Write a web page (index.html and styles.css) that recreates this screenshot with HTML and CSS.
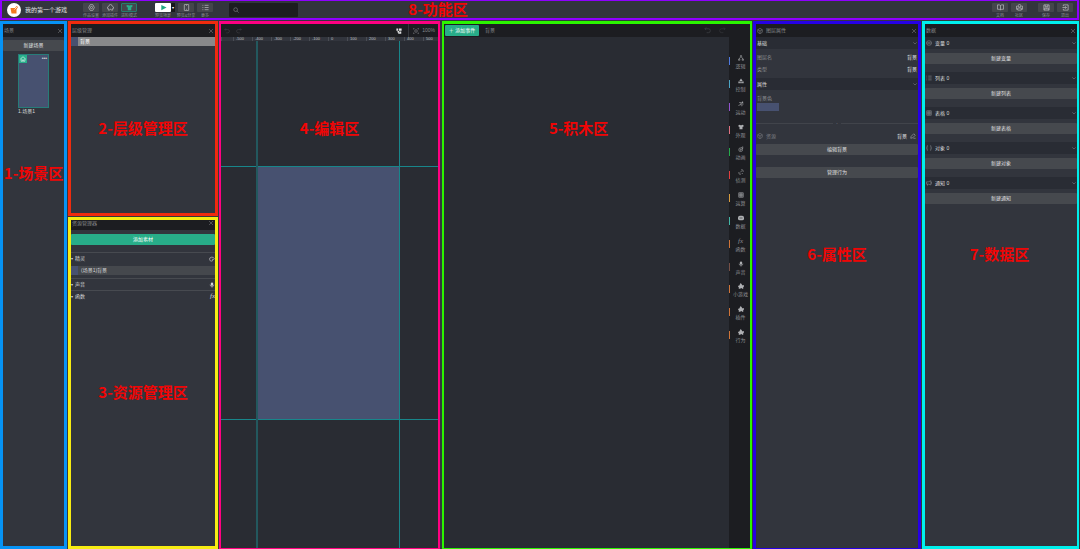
FILE: index.html
```html
<!DOCTYPE html>
<html lang="zh-CN">
<head>
<meta charset="utf-8">
<title>我的第一个游戏</title>
<link rel="stylesheet" href="styles.css">
</head>
<body>
<svg class="sprite" aria-hidden="true">
  <symbol id="close" viewBox="0 0 12 12"><path d="M2 2l8 8M10 2l-8 8"/></symbol>
  <symbol id="down" viewBox="0 0 12 12"><path d="M1 4l5 5 5-5"/></symbol>
  <symbol id="search" viewBox="0 0 16 16"><circle cx="7" cy="7" r="5"/><path d="M11 11l4 4"/></symbol>
  <symbol id="gear" viewBox="0 0 16 16"><path d="M5 1.500h6l3.500 6.500-3.500 6.500h-6l-3.500-6.500z"/><circle cx="8" cy="8" r="2.500"/></symbol>
  <symbol id="puzzle" viewBox="0 0 16 16"><path d="M3 14v-4H1V7l4-3a3 3 0 0 1 6 0l4 3v3h-2v4h-3a2 2 0 0 0-4 0z"/></symbol>
  <symbol id="shirt" viewBox="0 0 16 16"><path class="solid" d="M1 3l4-1q3 3 6 0l4 1-1 5-2-1v7H4V7L2 8z"/></symbol>
  <symbol id="play" viewBox="0 0 16 16"><path class="solid" d="M3 2l12 6-12 6z"/></symbol>
  <symbol id="phone" viewBox="0 0 16 16"><rect x="3" y="1" width="10" height="14" rx="1"/><path d="M7 3h2M7 12h2"/></symbol>
  <symbol id="list" viewBox="0 0 16 16"><path d="M1 3h2M6 3h9M1 8h2M6 8h9M1 13h2M6 13h9"/></symbol>
  <symbol id="book" viewBox="0 0 16 16"><path d="M8 4L6 2H1v10h5l2 2 2-2h5V2h-5zv10"/></symbol>
  <symbol id="people" viewBox="0 0 16 16"><circle cx="8" cy="4" r="3"/><path d="M4 14V9h8v5zM4 5H1v7h3M12 5h3v7h-3"/></symbol>
  <symbol id="save" viewBox="0 0 16 16"><path d="M2 2h12v12H2zM5 2v4h6V2M4 14V9h8v5M6 11h4"/></symbol>
  <symbol id="exit" viewBox="0 0 16 16"><path d="M3 5V2h11v12H3v-3M1 8h9M7 5l3 3-3 3"/></symbol>
  <symbol id="home" viewBox="0 0 16 16"><path d="M1 8l7-6 7 6M3 7v7h4v-4h2v4h4V7"/></symbol>
  <symbol id="undo" viewBox="0 0 16 16"><path d="M5 1L2 4l3 3M2 4h8a4 4 0 0 1 0 9H6"/></symbol>
  <symbol id="redo" viewBox="0 0 16 16"><path d="M11 1l3 3-3 3M14 4H6a4 4 0 0 0 0 9h4"/></symbol>
  <symbol id="check" viewBox="0 0 16 16"><path class="solid" d="M1 1h5v6H1zM8 1h7v6H8zM4 8h4v4H4zM9 9h5v6H9zM6 12h3v3H6z"/></symbol>
  <symbol id="fit" viewBox="0 0 16 16"><path d="M1 4V1h3M12 1h3v3M15 12v3h-3M4 15H1v-3M5 5h6v6H5z"/></symbol>
  <symbol id="logic" viewBox="0 0 16 16"><circle cx="8" cy="3" r="2"/><path d="M7 5l-4 6M9 5l4 6M1 11h4v3H1zM11 11h4v3h-4z"/></symbol>
  <symbol id="control" viewBox="0 0 16 16"><path class="solid" d="M4 7l4-6 4 6v1H4zM1 9h4v5H1zM6 9h4v5H6zM11 9h4v5h-4z"/></symbol>
  <symbol id="run" viewBox="0 0 16 16"><circle class="solid" cx="12" cy="3" r="2"/><path d="M3 4l6 0-3 6 5 0-1 4M1 12l5-2M9 5l2 3h4"/></symbol>
  <symbol id="motion" viewBox="0 0 16 16"><path d="M13 2L8 5a5 5 0 1 0 4 4zM8 9l5-3"/><circle cx="7" cy="10" r="1.500"/></symbol>
  <symbol id="detect" viewBox="0 0 16 16"><path d="M6 9L10 5M8 3q3-3 5 0t0 5M8 13q-3 3-5 0t0-5M10 12h3"/></symbol>
  <symbol id="table" viewBox="0 0 16 16"><path d="M2 2h12v12H2zM2 6h12M2 10h12M6 2v12M10 2v12"/></symbol>
  <symbol id="data" viewBox="0 0 16 16"><rect class="solid" x="0" y="2" width="16" height="12" rx="5"/><path d="M4 8h8" stroke="#1c1d21"/></symbol>
  <symbol id="mic" viewBox="0 0 16 16"><rect class="solid" x="5" y="1" width="6" height="9" rx="3"/><path d="M3 7q0 5 5 5t5-5M8 12v3"/></symbol>
  <symbol id="piece" viewBox="0 0 16 16"><path class="solid" d="M2 15v-5H0V7h3L7 0l3 3 1 3h5v4h-2v5h-4v-2H7v2z"/></symbol>
  <symbol id="box" viewBox="0 0 16 16"><path d="M8 1l6 3.500v7L8 15l-6-3.500v-7zM2 4.500L8 8l6-3.500M8 8v7"/></symbol>
  <symbol id="edit" viewBox="0 0 16 16"><path d="M2 14l1-5 7-7 4 4-7 7zM9 14h6"/></symbol>
  <symbol id="var" viewBox="0 0 16 16"><ellipse cx="8" cy="8" rx="7" ry="6"/><path d="M4 8h8M6 6l-2 2 2 2M10 6l2 2-2 2"/></symbol>
  <symbol id="braces" viewBox="0 0 16 16"><path d="M5 2H3v5L1 8l2 1v5h2M11 2h2v5l2 1-2 1v5h-2"/></symbol>
  <symbol id="notice" viewBox="0 0 16 16"><path d="M1 5h5l7-3v11l-7-2H1zM4 11v4M15 5v5"/></symbol>
  <symbol id="palette" viewBox="0 0 16 16"><path d="M14 7a6.500 5.500 0 1 0-6 7q2 0 1-3t4-2zM4 8h1M6 5h1M10 5h1"/></symbol>
</svg>

<header class="topbar">
  <div class="brand">
    <svg class="logo" viewBox="0 0 28 28"><circle cx="14" cy="14" r="14" fill="#fff"/><path d="M7 10h9l3-4 3 2-3 5v8H9z" fill="#f27a20"/><path d="M15 13l5-5" stroke="#fff"/></svg>
    <h1>我的第一个游戏</h1>
  </div>
  <nav class="tools">
    <button class="tool"><span class="face"><svg><use href="#gear"/></svg></span>作品设置</button>
    <button class="tool"><span class="face"><svg><use href="#puzzle"/></svg></span>添加插件</button>
    <button class="tool"><span class="face mode"><svg><use href="#shirt"/></svg></span>进阶模式</button>
  </nav>
  <nav class="tools tools-run">
    <button class="tool"><span class="face white"><svg><use href="#play"/></svg></span>预览场景</button>
    <button class="more" aria-label="更多">▾</button>
    <button class="tool"><span class="face"><svg><use href="#phone"/></svg></span>预览&amp;分享</button>
    <button class="tool"><span class="face"><svg><use href="#list"/></svg></span>更多</button>
  </nav>
  <label class="search"><svg><use href="#search"/></svg><input type="text" aria-label="搜索"></label>
  <nav class="tools tools-end">
    <button class="tool"><span class="face"><svg><use href="#book"/></svg></span>文档</button>
    <button class="tool"><span class="face"><svg><use href="#people"/></svg></span>社区</button>
    <button class="tool apart"><span class="face"><svg><use href="#save"/></svg></span>保存</button>
    <button class="tool"><span class="face"><svg><use href="#exit"/></svg></span>退出</button>
  </nav>
  <strong class="tag tag-top">8-功能区</strong>
</header>

<main class="workspace">
  <section class="panel scene">
    <header class="bar"><h2>场景</h2><button aria-label="关闭"><svg><use href="#close"/></svg></button></header>
    <div class="scene-body">
      <button class="wide">新建场景</button>
      <figure class="shot"><div class="thumb"><span class="home"><svg><use href="#home"/></svg></span><span class="dots">•••</span></div><figcaption>1.场景1</figcaption></figure>
    </div>
    <strong class="tag tag-scene">1-场景区</strong>
  </section>

  <div class="stack">
    <section class="panel layers">
      <header class="bar"><h2>层级管理</h2><button aria-label="关闭"><svg><use href="#close"/></svg></button></header>
      <div class="layer"><i class="chip"></i>背景</div>
      <strong class="tag tag-layers">2-层级管理区</strong>
    </section>
    <section class="panel assets">
      <header class="bar"><h2>资源管理器</h2><button aria-label="关闭"><svg><use href="#close"/></svg></button></header>
      <button class="wide green">添加素材</button>
      <div class="group"><span>▾</span>精灵<svg><use href="#palette"/></svg></div>
      <div class="asset"><i class="chip"></i>(场景1)背景</div>
      <div class="group"><span>▾</span>声音<svg><use href="#mic"/></svg></div>
      <div class="group"><span>▾</span>函数<em>fx</em></div>
      <strong class="tag tag-assets">3-资源管理区</strong>
    </section>
  </div>

  <section class="panel editor">
    <header class="bar">
      <button aria-label="撤销"><svg class="dim"><use href="#undo"/></svg></button>
      <button aria-label="重做"><svg class="dim"><use href="#redo"/></svg></button>
      <button class="grid-toggle" aria-label="网格"><svg><use href="#check"/></svg></button>
      <span class="zoom"><svg><use href="#fit"/></svg>100%</span>
    </header>
    <div class="ruler"><span></span><span>-500</span><span>-400</span><span>-300</span><span>-200</span><span>-100</span><span>0</span><span>100</span><span>200</span><span>300</span><span>400</span><span>500</span></div>
    <div class="canvas">
      <div class="stage"></div>
      <i class="guide-x top"></i><i class="guide-x bottom"></i><i class="guide-y left"></i><i class="guide-y right"></i>
    </div>
    <strong class="tag tag-editor">4-编辑区</strong>
  </section>

  <section class="panel blocks">
    <header class="bar">
      <button class="add">＋ 添加事件</button><h2>背景</h2>
      <button class="push" aria-label="撤销"><svg class="dim"><use href="#undo"/></svg></button>
      <button aria-label="重做"><svg class="dim"><use href="#redo"/></svg></button>
    </header>
    <div class="blocks-body">
      <div class="work"></div>
      <nav class="palette">
        <button class="c-blue"><svg><use href="#logic"/></svg>逻辑</button>
        <button class="c-sky"><svg><use href="#control"/></svg>控制</button>
        <button class="c-purple"><svg><use href="#run"/></svg>运动</button>
        <button class="c-pink"><svg><use href="#shirt"/></svg>外观</button>
        <button class="c-green"><svg><use href="#motion"/></svg>动画</button>
        <button class="c-red"><svg><use href="#detect"/></svg>侦测</button>
        <button class="c-amber"><svg><use href="#table"/></svg>运算</button>
        <button class="c-teal"><svg><use href="#data"/></svg>数据</button>
        <button class="c-orange"><em>fx</em>函数</button>
        <button class="c-brown"><svg><use href="#mic"/></svg>声音</button>
        <button class="c-orange"><svg><use href="#piece"/></svg>小游戏</button>
        <button class="c-orange"><svg><use href="#piece"/></svg>插件</button>
        <button class="c-orange"><svg><use href="#piece"/></svg>行为</button>
      </nav>
    </div>
    <strong class="tag tag-blocks">5-积木区</strong>
  </section>

  <section class="panel props">
    <header class="bar"><svg><use href="#box"/></svg><h2>图层属性</h2><button aria-label="关闭"><svg><use href="#close"/></svg></button></header>
    <h3 class="fold">基础<svg><use href="#down"/></svg></h3>
    <dl class="facts"><div><dt>图层名</dt><dd>背景</dd></div><div><dt>类型</dt><dd>背景</dd></div></dl>
    <h3 class="fold">属性<svg><use href="#down"/></svg></h3>
    <div class="color"><span>背景色</span><button class="swatch" aria-label="背景色"></button></div>
    <div class="rule"><span>•</span></div>
    <div class="resource"><svg><use href="#box"/></svg>资源<b>背景</b><svg><use href="#edit"/></svg></div>
    <button class="wide">编辑背景</button>
    <button class="wide behavior">管理行为</button>
    <strong class="tag tag-props">6-属性区</strong>
  </section>

  <section class="panel datas">
    <header class="bar"><h2>数据</h2><button aria-label="关闭"><svg><use href="#close"/></svg></button></header>
    <div class="kind"><h3 class="fold"><svg><use href="#var"/></svg>变量 0<svg><use href="#down"/></svg></h3><button class="wide">新建变量</button></div>
    <div class="kind"><h3 class="fold"><svg><use href="#list"/></svg>列表 0<svg><use href="#down"/></svg></h3><button class="wide">新建列表</button></div>
    <div class="kind"><h3 class="fold"><svg><use href="#table"/></svg>表格 0<svg><use href="#down"/></svg></h3><button class="wide">新建表格</button></div>
    <div class="kind"><h3 class="fold"><svg><use href="#braces"/></svg>对象 0<svg><use href="#down"/></svg></h3><button class="wide">新建对象</button></div>
    <div class="kind"><h3 class="fold"><svg><use href="#notice"/></svg>通知 0<svg><use href="#down"/></svg></h3><button class="wide">新建通知</button></div>
    <strong class="tag tag-datas">7-数据区</strong>
  </section>
</main>
</body>
</html>
```
FILE: styles.css
```css
* { box-sizing: border-box; }
body {
  margin: 0;
  min-height: 100vh;
  display: flex;
  flex-direction: column;
  gap: 1px;
  background: #35373d;
  color: #d4d5d7;
  font: 5px/7px "Liberation Sans", "Noto Sans CJK SC", sans-serif;
}
.sprite { display: none; }
h1, h2, h3, dl, dd, figure { margin: 0; font-size: inherit; font-weight: 400; }
button { margin: 0; padding: 0; border: 0; background: none; color: inherit; font: inherit; white-space: nowrap; }
svg { display: block; flex: none; width: 6px; height: 6px; fill: none; stroke: currentColor; stroke-width: 1.5; }
.solid { fill: currentColor; stroke: none; }
em { font: italic 7px/7px "Liberation Serif", serif; }

/* top bar */
.topbar {
  position: relative;
  display: flex;
  align-items: flex-start;
  height: 20px;
  margin-right: 1px;
  padding: 2px 4px 0 5px;
  border: solid #8f00ff;
  border-width: 1px 2px 2px 2px;
  background: #32353d;
}
.brand { display: flex; align-items: center; gap: 4px; width: 76px; }
.brand h1 { font-size: 6px; line-height: 12px; white-space: nowrap; color: #e4e4e5; }
.logo { width: 14px; height: 14px; stroke: none; }
.tools { display: flex; gap: 3px; }
.tools-run { margin-left: 18px; }
.tools-end { margin-left: auto; }
.tool { display: flex; flex-direction: column; align-items: center; width: 16px; font-size: 4px; line-height: 6px; color: #8d8f93; }
.face { display: flex; align-items: center; justify-content: center; width: 16px; height: 9px; margin-bottom: 1px; border-radius: 1px; background: #44464c; color: #c6c7c9; }
.face svg { width: 7px; height: 7px; }
.mode { border: 1px solid #277c6c; color: #28af8b; }
.white { background: #fff; color: #20a883; }
.more { width: 4px; height: 9px; margin-left: -3px; background: #17181b; font-size: 4px; color: #fff; }
.apart { margin-left: 8px; }
.search { display: flex; align-items: center; width: 69px; height: 14px; margin-left: 16px; padding: 0 4px; border-radius: 1px; background: #1c1d21; color: #8b8d90; }
.search input { flex: 1; min-width: 0; border: 0; padding: 0; background: none; color: inherit; font: inherit; }

/* panels */
.workspace { flex: 1; display: grid; grid-template-columns: 67fr 150fr 221fr 311fr 168fr 158fr; column-gap: 1px; }
.panel { position: relative; min-width: 0; border: 3px solid; background: #32353d; }
.stack { display: grid; grid-template-rows: 195px 1fr; row-gap: 1px; }
.bar { display: flex; align-items: center; height: 13px; padding: 0 1px; background: #1c1d21; color: #85878b; }
.bar > button:last-child { margin-left: auto; }
.bar > button:last-child svg { stroke-width: 1; }
.scene { border-color: #0693f5; }
.layers { border-color: #f02b0d; }
.assets { border-color: #f6ec12; }
.editor { border: 2px solid #ff0082; border-width: 3px 2px 1px; }
.blocks { border: 2px solid #2bf500; border-width: 3px 2px 1px; margin-left: 1px; }
.props { border-color: #2600e5; border-bottom-width: 1px; }
.datas { border-color: #00f0ec; border-right-width: 2px; margin-right: 1px; }

.wide { display: block; width: 100%; height: 11px; border-radius: 1px; background: #46494e; color: #e0e1e2; }
.chip { flex: none; width: 7px; height: 9px; background: #475170; }
.fold { display: flex; align-items: center; gap: 3px; height: 12px; padding: 0 1px; background: #292c34; color: #dcddde; }
.fold svg { color: #8d8f93; }
.fold svg:last-child { width: 4px; height: 4px; margin-left: auto; }

/* scene */
.scene-body { display: flex; flex-direction: column; align-items: center; gap: 3px; padding-top: 3px; }
.shot { width: 31px; }
.thumb { display: flex; justify-content: space-between; height: 54px; border: 1px solid #277c79; background: #475170; }
.home { display: grid; place-items: center; width: 8px; height: 8px; background: #28af8b; color: #fff; }
.dots { padding-right: 1px; }

/* layers and assets */
.layer { display: flex; align-items: center; gap: 2px; height: 9px; background: #88898b; color: #fff; }
.green { background: #28ad89; color: #fff; }
.assets .bar { height: 10px; padding-bottom: 4px; }
.assets .green { margin: 4px 0 7px; }
.group { display: flex; align-items: center; height: 12px; border-top: 1px solid #474a50; }
.group span { width: 4px; font-size: 4px; }
.group svg, .group em { margin-left: auto; }
.asset { display: flex; align-items: center; gap: 3px; height: 9px; margin: 2px 0 3px; background: #45484d; }

/* editor */
.editor { display: flex; flex-direction: column; }
.editor .bar { gap: 6px; padding: 0 3px; }
.editor .grid-toggle { margin-left: auto; color: #e0e1e2; }
.dim { color: #42444a; }
.zoom { display: flex; align-items: center; gap: 3px; height: 13px; padding-left: 4px; border-left: 1px solid #35373d; }
.ruler { display: grid; grid-template-columns: 12fr repeat(10, 19fr) 15fr; height: 4px; overflow: hidden; background: #32353d; color: #c0c2c5; font-size: 4px; line-height: 4px; }
.ruler span { min-width: 0; padding-left: 2px; border-left: 1px solid #4a4d54; }
.canvas { position: relative; flex: 1; background: #292c33; }
.stage { position: absolute; left: 36px; right: 39px; top: 125px; height: 253px; background: #475170; }
.guide-x { position: absolute; left: 0; right: 0; height: 1px; background: #18868b; }
.guide-y { position: absolute; top: 0; bottom: 0; width: 1px; background: #18868b; }
.top { top: 125px; }
.bottom { top: 378px; }
.left { left: 35px; width: 2px; background: #23585e; }
.right { right: 38px; }

/* blocks */
.blocks { display: flex; flex-direction: column; }
.blocks .bar { gap: 6px; }
.blocks .push { margin-left: auto; }
.blocks .push + button { margin: 0 23px 0 2px; }
.blocks .bar .dim { width: 7px; height: 7px; }
.add { width: 34px; height: 11px; border-radius: 1px; background: #28ad89; color: #fff; }
.blocks-body { flex: 1; display: flex; background: #1c1d21; }
.work { flex: 1; background: #292c33; }
.palette { display: grid; grid-auto-rows: 1fr; width: 21px; height: 297px; margin-top: 16px; }
.palette button { position: relative; display: flex; flex-direction: column; align-items: center; gap: 2px; width: 21px; padding: 2px 0 0 2px; color: #8d8f93; }
.palette svg { color: #aeb0b3; }
.palette em { line-height: 6px; }
.palette button::before { content: ""; position: absolute; left: 0; top: 4px; width: 1px; height: 8px; background: currentColor; }
.palette .c-blue::before { background: #4e79df; }
.palette .c-sky::before { background: #4ca4c4; }
.palette .c-purple::before { background: #9354cd; }
.palette .c-pink::before { background: #df7180; }
.palette .c-green::before { background: #25aa4b; }
.palette .c-red::before { background: #e23e3e; }
.palette .c-amber::before { background: #d69a3d; }
.palette .c-teal::before { background: #42b5a5; }
.palette .c-orange::before { background: #cf7438; }
.palette .c-brown::before { background: #775046; }

/* properties */
.props .bar { gap: 3px; }
.facts { height: 29px; padding: 2px 0 3px; }
.facts div { display: flex; align-items: center; justify-content: space-between; height: 12px; padding: 0 1px; }
.facts dt, .color { color: #8d8f93; }
.facts dd { color: #e0e1e2; }
.color { padding: 5px 1px 0; }
.swatch { display: block; width: 22px; height: 8px; margin-top: 1px; background: #475170; }
.rule { display: flex; align-items: center; gap: 3px; height: 7px; margin: 9px 0 5px; font-size: 4px; color: #5c5f66; }
.rule::before, .rule::after { content: ""; flex: 1; height: 1px; background: #41444b; }
.resource { display: flex; align-items: center; gap: 3px; height: 8px; margin-bottom: 4px; padding: 0 2px 0 1px; color: #7c7e83; }
.resource b { margin-left: auto; font-weight: 400; color: #e0e1e2; }
.resource b + svg { color: #b4b6b9; }
.behavior { margin-top: 12px; }

/* data */
.kind { height: 35px; }
.kind .wide { margin-top: 4px; }

/* area names */
.tag { position: absolute; transform: translate(-50%, -50%); color: #f00505; font: 700 15px/16px "Noto Sans CJK SC", sans-serif; white-space: nowrap; pointer-events: none; }
.tag-top { left: 436px; top: 8px; }
.tag-scene { left: 50%; top: 149px; }
.tag-layers { left: 50%; top: 104px; }
.tag-assets { left: 50%; top: 172px; }
.tag-editor { left: 50%; top: 104px; }
.tag-blocks { left: 44%; top: 104px; }
.tag-props { left: 50%; top: 230px; }
.tag-datas { left: 49%; top: 230px; }
```
